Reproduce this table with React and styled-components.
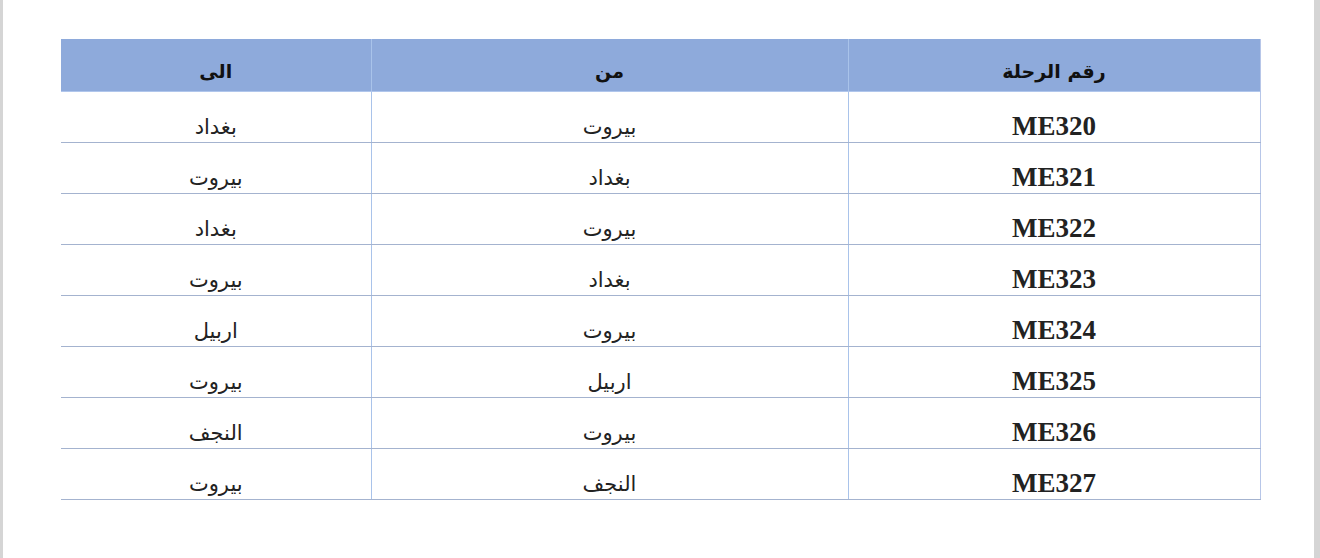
import React from "react";
import styled, { createGlobalStyle } from "styled-components";

const Global = createGlobalStyle`
  html, body { margin: 0; padding: 0; background: #fff; }
  body { font-family: "DejaVu Sans", "Liberation Sans", sans-serif; }
`;

const Page = styled.div`
  box-sizing: border-box;
  width: 1320px;
  height: 558px;
  background: #fff;
  border-left: 3px solid #d5d5d5;
  border-right: 6px solid #d5d5d5;
  padding: 39px 0 0 58px;
`;

const Table = styled.table`
  width: 1199px;
  border-collapse: collapse;
  table-layout: fixed;
  direction: rtl;
  border-right: 1px solid #b7c6e8;
`;

const HeadCell = styled.th`
  height: 52px;
  padding: 18px 0 0;
  box-sizing: border-box;
  background: #8eaadb;
  color: #111;
  font-family: "DejaVu Sans", sans-serif;
  font-weight: bold;
  font-size: 19px;
  line-height: 28px;
  text-align: center;
  vertical-align: top;
  border-left: 1px solid #a9c3ea;
  border-bottom: 1px solid #b0c6ec;
  &:last-child { border-left: none; }
`;

const Cell = styled.td`
  height: 51px;
  box-sizing: border-box;
  padding: ${(p) => (p.$code ? "19px" : "20px")} 0 0;
  text-align: center;
  vertical-align: top;
  color: #222;
  font-family: ${(p) => (p.$code ? '"Liberation Serif", serif' : '"DejaVu Sans", sans-serif')};
  font-weight: ${(p) => (p.$code ? "bold" : "normal")};
  font-size: ${(p) => (p.$code ? "27px" : "21px")};
  line-height: 30px;
  border-left: 1px solid #a9c3ea;
  border-bottom: 1px solid #a4b3cf;
  &:last-child { border-left: none; }
`;

const rows = [
  ["ME320", "بيروت", "بغداد"],
  ["ME321", "بغداد", "بيروت"],
  ["ME322", "بيروت", "بغداد"],
  ["ME323", "بغداد", "بيروت"],
  ["ME324", "بيروت", "اربيل"],
  ["ME325", "اربيل", "بيروت"],
  ["ME326", "بيروت", "النجف"],
  ["ME327", "النجف", "بيروت"],
];

export default function App() {
  return (
    <>
      <Global />
      <Page>
        <Table>
          <colgroup>
            <col style={{ width: 412 }} />
            <col style={{ width: 477 }} />
            <col style={{ width: 310 }} />
          </colgroup>
          <thead>
            <tr>
              <HeadCell>رقم الرحلة</HeadCell>
              <HeadCell>من</HeadCell>
              <HeadCell>الى</HeadCell>
            </tr>
          </thead>
          <tbody>
            {rows.map((r) => (
              <tr key={r[0]}>
                <Cell $code>{r[0]}</Cell>
                <Cell>{r[1]}</Cell>
                <Cell>{r[2]}</Cell>
              </tr>
            ))}
          </tbody>
        </Table>
      </Page>
    </>
  );
}
